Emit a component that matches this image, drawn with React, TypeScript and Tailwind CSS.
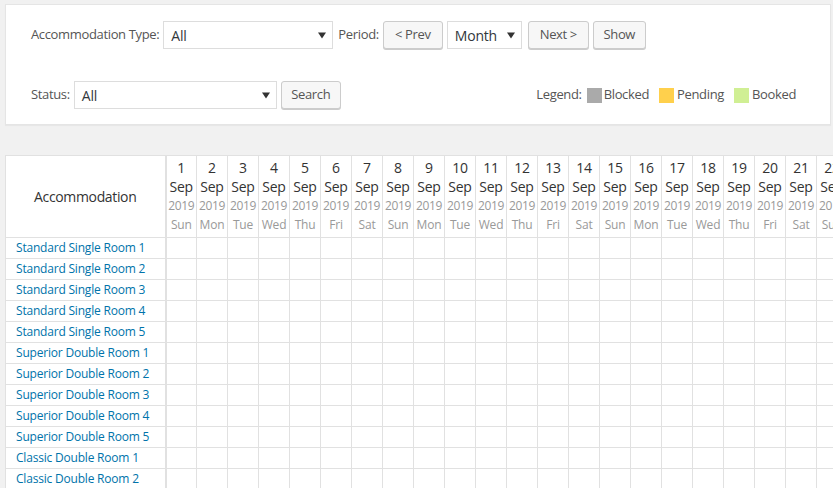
import React from "react";

const days = Array.from({ length: 30 }, (_, i) => i + 1);
const wd = ["Sun", "Mon", "Tue", "Wed", "Thu", "Fri", "Sat"];
const rooms = [
  "Standard Single Room 1",
  "Standard Single Room 2",
  "Standard Single Room 3",
  "Standard Single Room 4",
  "Standard Single Room 5",
  "Superior Double Room 1",
  "Superior Double Room 2",
  "Superior Double Room 3",
  "Superior Double Room 4",
  "Superior Double Room 5",
  "Classic Double Room 1",
  "Classic Double Room 2",
  "Classic Double Room 3",
];

function Arrow() {
  return (
    <svg width="8" height="8" viewBox="0 0 8 8" className="shrink-0">
      <path d="M0 1.5 L8 1.5 L4 7.5 Z" fill="#333" />
    </svg>
  );
}

function Select({ value, w }: { value: string; w: string }) {
  return (
    <div
      className={`${w} h-[28px] border border-[#dddddd] bg-white flex items-center justify-between pl-[7px] pr-[6px] text-[14px] tracking-[-0.2px] text-[#32373c]`}
    >
      <span>{value}</span>
      <Arrow />
    </div>
  );
}

function Btn({ children, w }: { children: React.ReactNode; w: string }) {
  return (
    <div
      className={`${w} h-[28px] border border-[#cccccc] bg-[#f7f7f7] rounded-[3px] shadow-[0_1px_0_#cccccc] flex items-center justify-center text-[13px] text-[#555555]`}
    >
      {children}
    </div>
  );
}

export default function App() {
  return (
    <div
      className="w-[833px] h-[488px] overflow-hidden bg-[#f1f1f1] text-[13px] tracking-[-0.35px] text-[#444]"
      style={{ fontFamily: '"Open Sans", "Noto Sans", sans-serif' }}
    >
      <div className="ml-[5px] mr-[2px] mt-[4px] bg-white border border-[#e5e5e5] shadow-[0_1px_1px_rgba(0,0,0,0.04)] pl-[25px] pr-[34px] pt-[16px] pb-[15px] flex flex-col gap-[32px]">
        <div className="flex items-center">
          <span className="mr-[4px] text-[#555]">Accommodation Type:</span>
          <Select value="All" w="w-[170px]" />
          <span className="ml-[5px] mr-[4px] text-[#555]">Period:</span>
          <Btn w="w-[60px]">&lt;&nbsp;Prev</Btn>
          <div className="ml-[4px]">
            <Select value="Month" w="w-[75px]" />
          </div>
          <div className="ml-[6px]">
            <Btn w="w-[61px]">Next&nbsp;&gt;</Btn>
          </div>
          <div className="ml-[4px]">
            <Btn w="w-[53px]">Show</Btn>
          </div>
        </div>
        <div className="flex items-center">
          <span className="mr-[4px] text-[#555]">Status:</span>
          <Select value="All" w="w-[203px]" />
          <div className="ml-[4px]">
            <Btn w="w-[60px]">Search</Btn>
          </div>
          <div className="ml-auto flex items-center text-[#555]">
            <span className="mr-[5px]">Legend:</span>
            <span className="w-[15px] h-[15px] bg-[#aaaaaa] mr-[2px]" />
            <span className="mr-[10px]">Blocked</span>
            <span className="w-[15px] h-[15px] bg-[#ffd04c] mr-[3px]" />
            <span className="mr-[10px]">Pending</span>
            <span className="w-[15px] h-[15px] bg-[#d0ef94] mr-[3px]" />
            <span>Booked</span>
          </div>
        </div>
      </div>

      <div className="ml-[5px] mt-[30px]">
        <table className="border-collapse bg-white table-fixed">
          <thead>
            <tr>
              <th className="w-[160px] min-w-[160px] h-[82px] border border-[#e1e1e1] border-r-2 font-normal text-[14px] text-[#333] align-middle">
                Accommodation
              </th>
              {days.map((d) => (
                <th
                  key={d}
                  className="w-[31px] min-w-[31px] border border-[#e1e1e1] font-normal align-top p-0 tracking-[-0.2px]"
                >
                  <div className="flex flex-col items-center pt-[2px]">
                    <span className="text-[14px] leading-[19px] text-[#333]">{d}</span>
                    <span className="text-[14px] leading-[19px] text-[#333]">Sep</span>
                    <span className="text-[12px] leading-[19px] text-[#999] tracking-[-0.4px]">2019</span>
                    <span className="text-[12px] leading-[20px] text-[#999]">
                      {wd[(d - 1) % 7]}
                    </span>
                  </div>
                </th>
              ))}
            </tr>
          </thead>
          <tbody>
            {rooms.map((r) => (
              <tr key={r}>
                <td className="h-[21px] border border-[#e1e1e1] border-r-2 py-0 pr-0 pl-[10px] text-[12px] tracking-[-0.2px] text-[#0073aa] whitespace-nowrap leading-[20px]">
                  {r}
                </td>
                {days.map((d) => (
                  <td key={d} className="border border-[#e1e1e1] p-0" />
                ))}
              </tr>
            ))}
          </tbody>
        </table>
      </div>
    </div>
  );
}
